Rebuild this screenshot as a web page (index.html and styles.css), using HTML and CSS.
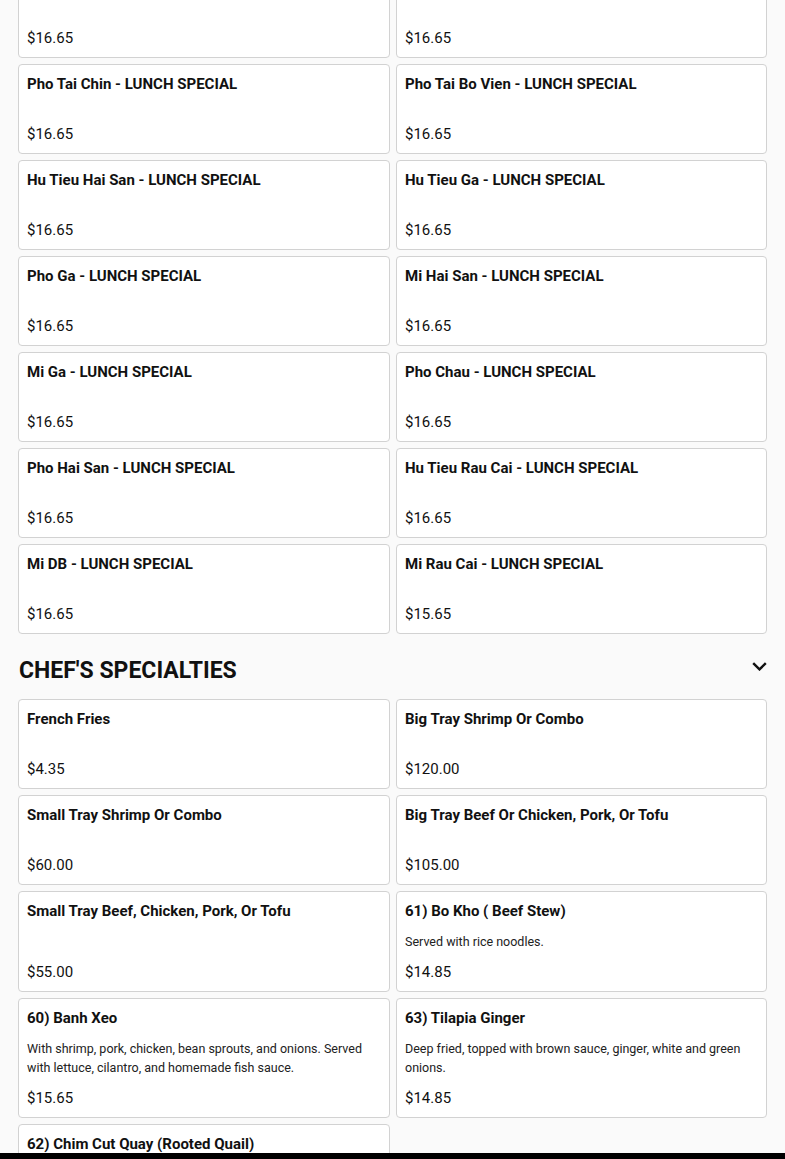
FILE: index.html
```html
<!DOCTYPE html>
<html lang="en">
<head>
<meta charset="utf-8">
<title>Menu</title>
<link rel="stylesheet" href="styles.css">
</head>
<body>
<div class="page">
  <section class="section section-lunch">
    <div class="grid">
      <div class="card"><div class="title">Pho Dac Biet - LUNCH SPECIAL</div><div class="price">$16.65</div></div>
      <div class="card"><div class="title">Pho Tai - LUNCH SPECIAL</div><div class="price">$16.65</div></div>
      <div class="card"><div class="title">Pho Tai Chin - LUNCH SPECIAL</div><div class="price">$16.65</div></div>
      <div class="card"><div class="title">Pho Tai Bo Vien - LUNCH SPECIAL</div><div class="price">$16.65</div></div>
      <div class="card"><div class="title">Hu Tieu Hai San - LUNCH SPECIAL</div><div class="price">$16.65</div></div>
      <div class="card"><div class="title">Hu Tieu Ga - LUNCH SPECIAL</div><div class="price">$16.65</div></div>
      <div class="card"><div class="title">Pho Ga - LUNCH SPECIAL</div><div class="price">$16.65</div></div>
      <div class="card"><div class="title">Mi Hai San - LUNCH SPECIAL</div><div class="price">$16.65</div></div>
      <div class="card"><div class="title">Mi Ga - LUNCH SPECIAL</div><div class="price">$16.65</div></div>
      <div class="card"><div class="title">Pho Chau - LUNCH SPECIAL</div><div class="price">$16.65</div></div>
      <div class="card"><div class="title">Pho Hai San - LUNCH SPECIAL</div><div class="price">$16.65</div></div>
      <div class="card"><div class="title">Hu Tieu Rau Cai - LUNCH SPECIAL</div><div class="price">$16.65</div></div>
      <div class="card"><div class="title">Mi DB - LUNCH SPECIAL</div><div class="price">$16.65</div></div>
      <div class="card"><div class="title">Mi Rau Cai - LUNCH SPECIAL</div><div class="price">$15.65</div></div>
    </div>
  </section>

  <section class="section">
    <div class="section-head">
      <h2 class="section-title">CHEF'S SPECIALTIES</h2>
      <svg class="chevron" width="15" height="9" viewBox="0 0 15 9" aria-hidden="true">
        <path d="M1.2 1.2 L7.5 7.4 L13.8 1.2" fill="none" stroke="#111" stroke-width="2.4"/>
      </svg>
    </div>
    <div class="grid">
      <div class="card"><div class="title">French Fries</div><div class="price">$4.35</div></div>
      <div class="card"><div class="title">Big Tray Shrimp Or Combo</div><div class="price">$120.00</div></div>
      <div class="card"><div class="title">Small Tray Shrimp Or Combo</div><div class="price">$60.00</div></div>
      <div class="card"><div class="title">Big Tray Beef Or Chicken, Pork, Or Tofu</div><div class="price">$105.00</div></div>
      <div class="card"><div class="title">Small Tray Beef, Chicken, Pork, Or Tofu</div><div class="price">$55.00</div></div>
      <div class="card"><div class="title">61) Bo Kho ( Beef Stew)</div><div class="desc">Served with rice noodles.</div><div class="price">$14.85</div></div>
      <div class="card"><div class="title">60) Banh Xeo</div><div class="desc">With shrimp, pork, chicken, bean sprouts, and onions. Served with lettuce, cilantro, and homemade fish sauce.</div><div class="price">$15.65</div></div>
      <div class="card"><div class="title">63) Tilapia Ginger</div><div class="desc">Deep fried, topped with brown sauce, ginger, white and green onions.</div><div class="price">$14.85</div></div>
      <div class="card"><div class="title">62) Chim Cut Quay (Rooted Quail)</div><div class="desc">Served with salt, pepper and lime dipping sauce.</div><div class="price">$15.65</div></div>
    </div>
  </section>
</div>
<div class="bottom-bar"></div>
</body>
</html>
```

FILE: styles.css
```css
html, body {
  margin: 0;
  padding: 0;
}

body {
  background: #fafafa;
  font-family: Roboto, "Liberation Sans", Arial, sans-serif;
  color: #111;
  height: 1159px;
  overflow: hidden;
  position: relative;
}

.page {
  width: 778px;
  box-sizing: border-box;
  padding: 0 11px 0 18px;
}

.section-lunch {
  margin-top: -32px;
}

.grid {
  display: grid;
  grid-template-columns: 372px 371px;
  gap: 6px;
}

.card {
  box-sizing: border-box;
  min-height: 90px;
  background: #fff;
  border: 1px solid #d2d2d2;
  border-radius: 4px;
  padding: 8px 8px 8px;
  display: flex;
  flex-direction: column;
}

.title {
  font-size: 15px;
  font-weight: 700;
  line-height: 22px;
  color: #111;
}

.desc {
  margin-top: 10px;
  font-size: 12.5px;
  line-height: 19px;
  color: #222;
}

.price {
  margin-top: auto;
  padding-top: 10px;
  font-size: 15px;
  line-height: 22px;
  color: #111;
}

.section-head {
  display: flex;
  align-items: center;
  justify-content: space-between;
  margin: 23px 0 14px;
}

.section-title {
  margin: 0 0 0 1px;
  font-size: 23px;
  font-weight: 700;
  line-height: 28px;
  color: #111;
}

.chevron {
  display: block;
  margin-bottom: 10px;
}

.bottom-bar {
  position: absolute;
  left: 0;
  right: 0;
  bottom: 0;
  height: 6px;
  background: #000;
}
```
